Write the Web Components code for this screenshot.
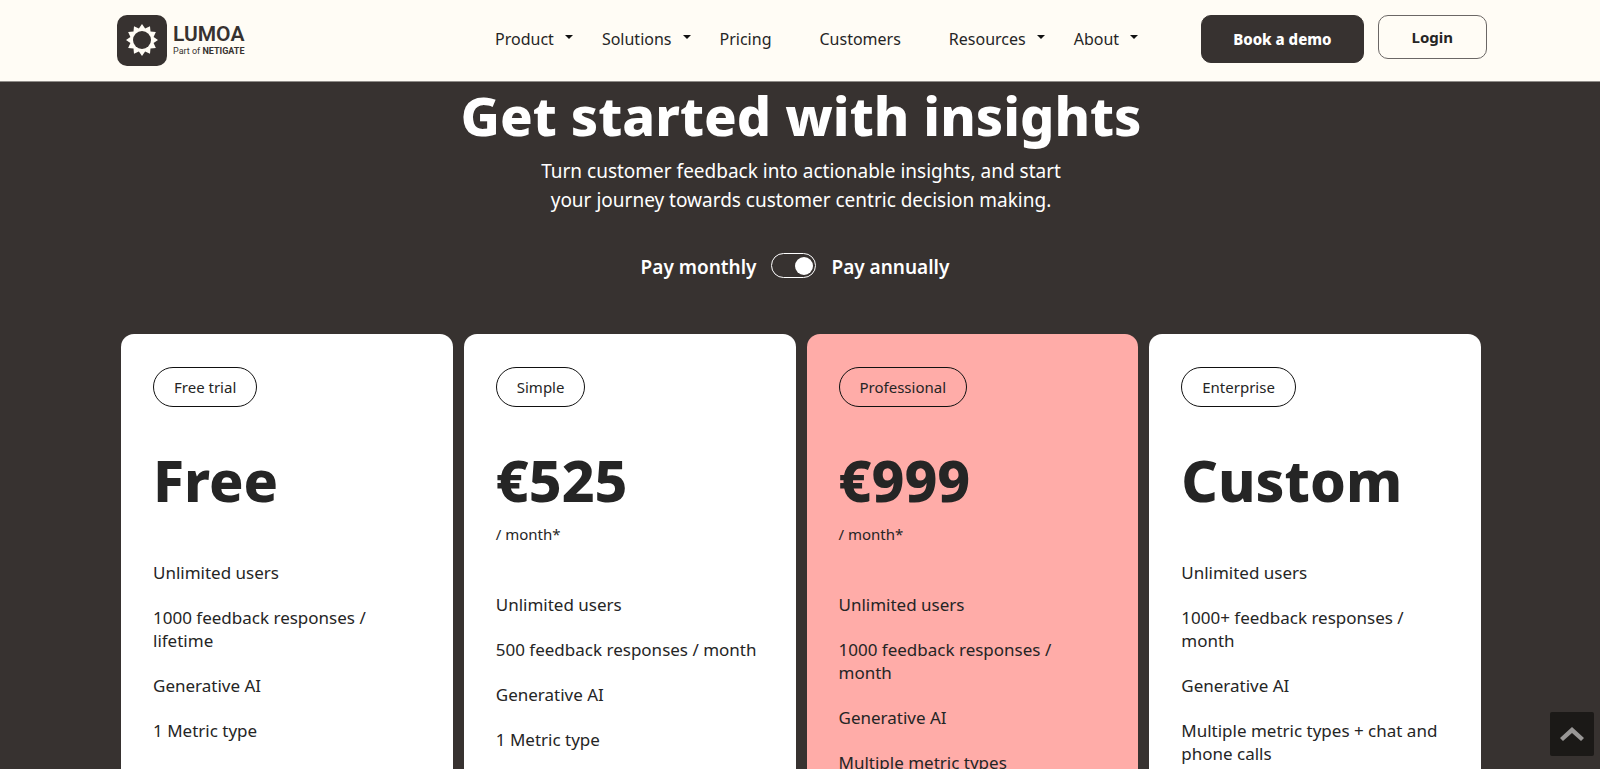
<!DOCTYPE html>
<html lang="en">
<head>
<meta charset="utf-8">
<meta name="viewport" content="width=device-width, initial-scale=1">
<title>Lumoa pricing</title>
<style>
  html { background: #373230; }
  body { margin: 0; font-family: "Noto Sans", sans-serif; color: #252525; }
  *:not(:defined) { visibility: hidden; }
</style>
</head>
<body>
<site-header>
  <brand-logo slot="logo"></brand-logo>
  <nav-item href="#product" menu>Product</nav-item>
  <nav-item href="#solutions" menu>Solutions</nav-item>
  <nav-item href="#pricing">Pricing</nav-item>
  <nav-item href="#customers">Customers</nav-item>
  <nav-item href="#resources" menu>Resources</nav-item>
  <nav-item href="#about" menu>About</nav-item>
  <action-link slot="actions" href="#demo" primary>Book a demo</action-link>
  <action-link slot="actions" href="#login">Login</action-link>
</site-header>
<pricing-section>
  <span slot="title">Get started with insights</span>
  <span slot="intro">Turn customer feedback into actionable insights, and start your journey towards customer centric decision making.</span>
  <billing-switch slot="switch"></billing-switch>
  <plan-card name="Free trial" price="Free">
    <plan-feature>Unlimited users</plan-feature>
    <plan-feature>1000 feedback responses / lifetime</plan-feature>
    <plan-feature>Generative AI</plan-feature>
    <plan-feature>1 Metric type</plan-feature>
  </plan-card>
  <plan-card name="Simple" price="€525" period="/ month*">
    <plan-feature>Unlimited users</plan-feature>
    <plan-feature>500 feedback responses / month</plan-feature>
    <plan-feature>Generative AI</plan-feature>
    <plan-feature>1 Metric type</plan-feature>
  </plan-card>
  <plan-card name="Professional" price="€999" period="/ month*" featured>
    <plan-feature>Unlimited users</plan-feature>
    <plan-feature>1000 feedback responses / month</plan-feature>
    <plan-feature>Generative AI</plan-feature>
    <plan-feature>Multiple metric types</plan-feature>
  </plan-card>
  <plan-card name="Enterprise" price="Custom">
    <plan-feature>Unlimited users</plan-feature>
    <plan-feature>1000+ feedback responses / month</plan-feature>
    <plan-feature>Generative AI</plan-feature>
    <plan-feature>Multiple metric types + chat and phone calls</plan-feature>
  </plan-card>
</pricing-section>
<scroll-top></scroll-top>

<script>
const define = (name, markup, setup) => {
  const template = document.createElement('template');
  template.innerHTML = markup;
  customElements.define(name, class extends HTMLElement {
    constructor() {
      super();
      this.attachShadow({ mode: 'open' }).append(template.content.cloneNode(true));
    }
    connectedCallback() { if (setup) setup(this, this.shadowRoot); }
  });
};

// Sun with twelve rays: outer and inner points alternate round the centre.
const sunPoints = Array.from({ length: 24 }, (_, i) => {
  const r = i % 2 ? 12 : 16;
  const a = Math.PI * i / 12 - Math.PI / 2;
  return (25 + r * Math.cos(a)).toFixed(2) + ',' + (25 + r * Math.sin(a)).toFixed(2);
}).join(' ');

define('brand-logo', `
  <style>
    :host { display: block; }
    a { display: flex; align-items: center; gap: 6px; color: #373230; text-decoration: none; }
    svg { display: block; }
    .words { display: flex; flex-direction: column; padding-bottom: 2px; }
    .name { font: 600 21px/22px Roboto, sans-serif; }
    .part { font: 400 9px/12px Roboto, sans-serif; white-space: nowrap; }
    b { font-weight: 700; }
  </style>
  <a href="#home" aria-label="Lumoa, part of Netigate">
    <svg width="50" height="51" viewBox="0 0 50 51" aria-hidden="true">
      <rect width="50" height="51" rx="10" fill="#373230"/>
      <polygon points="${sunPoints}" fill="#fffcf5"/>
      <circle cx="25" cy="25" r="9" fill="#373230"/>
    </svg>
    <span class="words"><span class="name">LUMOA</span><span class="part">Part of <b>NETIGATE</b></span></span>
  </a>`);

define('nav-item', `
  <style>
    :host { display: block; }
    a { display: flex; align-items: center; gap: 11px; font-size: 16px; line-height: 24px; color: #252525; text-decoration: none; white-space: nowrap; }
    svg { display: block; margin-bottom: 4px; visibility: hidden; }
    :host([menu]) svg { visibility: visible; }
  </style>
  <a><slot></slot><svg width="8" height="4" viewBox="0 0 8 4" aria-hidden="true"><path d="M0 0h8L4 4z" fill="#111"/></svg></a>`,
  (host, root) => { root.querySelector('a').href = host.getAttribute('href'); });

define('action-link', `
  <style>
    :host { display: block; }
    a { display: block; box-sizing: border-box; padding: 9px 33px; border: 1px solid #6b6765; border-radius: 10px; font-size: 15px; line-height: 24px; font-weight: 700; color: #252525; text-decoration: none; white-space: nowrap; }
    :host([primary]) a { padding: 11px 31px; font-weight: 800; background: #373230; border-color: #373230; color: #fff; }
  </style>
  <a><slot></slot></a>`,
  (host, root) => { root.querySelector('a').href = host.getAttribute('href'); });

define('site-header', `
  <style>
    :host { display: block; position: sticky; top: 0; z-index: 2; background: #fffcf5; border-bottom: 1px solid #8f8c88; }
    header { display: flex; align-items: flex-start; box-sizing: border-box; max-width: 1600px; min-height: 81px; margin: 0 auto; padding: 15px 113px 15px 117px; }
    nav { display: flex; gap: 29px; margin: 12px 63px 0 auto; }
    .actions { display: flex; align-items: flex-start; gap: 14px; }
  </style>
  <header>
    <slot name="logo"></slot>
    <nav aria-label="Main"><slot></slot></nav>
    <div class="actions"><slot name="actions"></slot></div>
  </header>`);

define('billing-switch', `
  <style>
    :host { display: flex; justify-content: center; padding-right: 12px; }
    label { display: flex; align-items: center; gap: 15px; font-size: 19px; line-height: 28px; font-weight: 600; color: #fff; }
    input { appearance: none; display: flex; align-items: center; box-sizing: border-box; width: 45px; height: 25px; margin: 0 0 3px; padding: 0 2px; border: 1px solid #fff; border-radius: 13px; }
    input::before { content: ""; width: 18px; height: 18px; border-radius: 50%; background: #fff; }
    input:checked { justify-content: flex-end; }
  </style>
  <label><span>Pay monthly</span><input type="checkbox" role="switch" checked><span>Pay annually</span></label>`);

define('plan-feature', `
  <style>:host { display: list-item; list-style: none; font-size: 17px; line-height: 23px; }</style>
  <slot></slot>`,
  host => host.setAttribute('role', 'listitem'));

define('plan-card', `
  <style>
    :host { display: block; background: #fff; border-radius: 13px; }
    :host([featured]) { background: #ffaca8; }
    article { display: flex; flex-direction: column; align-items: flex-start; padding: 33px 32px 40px; }
    .name { margin: 0; padding: 7px 20px; border: 1px solid #111; border-radius: 20px; font-size: 15px; line-height: 24px; font-weight: 400; }
    .price { margin: 39px 0 0; font-size: 57px; line-height: 68px; font-weight: 800; }
    .period { margin: 8px 0 0; font-size: 15px; line-height: 24px; }
    .features { display: flex; flex-direction: column; gap: 22px; margin-top: 47px; }
    :host(:not([period])) .period { display: none; }
  </style>
  <article>
    <h2 class="name"></h2>
    <p class="price"></p>
    <p class="period"></p>
    <div class="features" role="list"><slot></slot></div>
  </article>`,
  (host, root) => {
    for (const key of ['name', 'price', 'period']) {
      root.querySelector('.' + key).textContent = host.getAttribute(key) || '';
    }
  });

define('pricing-section', `
  <style>
    :host { display: block; background: #373230; color: #fff; }
    section { max-width: 1360px; margin: 0 auto; padding: 0 24px 80px 26px; }
    h1 { margin: 0; font-size: 54px; line-height: 66px; font-weight: 800; text-align: center; }
    .intro { max-width: 560px; margin: 9px auto 0; font-size: 19px; line-height: 29px; text-align: center; }
    .switch { margin-top: 38px; }
    .plans { display: grid; grid-template-columns: repeat(4, minmax(0, 1fr)); gap: 11px; margin-top: 53px; color: #252525; }
  </style>
  <section>
    <h1><slot name="title"></slot></h1>
    <p class="intro"><slot name="intro"></slot></p>
    <div class="switch"><slot name="switch"></slot></div>
    <div class="plans"><slot></slot></div>
  </section>`);

define('scroll-top', `
  <style>
    :host { display: block; position: fixed; right: 6px; bottom: 13px; z-index: 3; }
    button { display: flex; align-items: center; justify-content: center; width: 44px; height: 44px; padding: 0; border: 0; border-radius: 2px; background: #1b1917; cursor: pointer; }
  </style>
  <button type="button" aria-label="Back to top">
    <svg width="24" height="14" viewBox="0 0 24 14" aria-hidden="true"><path d="M0 11 12 0l12 11-3 3L12 6 3 14z" fill="#999796"/></svg>
  </button>`,
  (host, root) => { root.querySelector('button').onclick = () => scrollTo({ top: 0, behavior: 'smooth' }); });
</script>
</body>
</html>
